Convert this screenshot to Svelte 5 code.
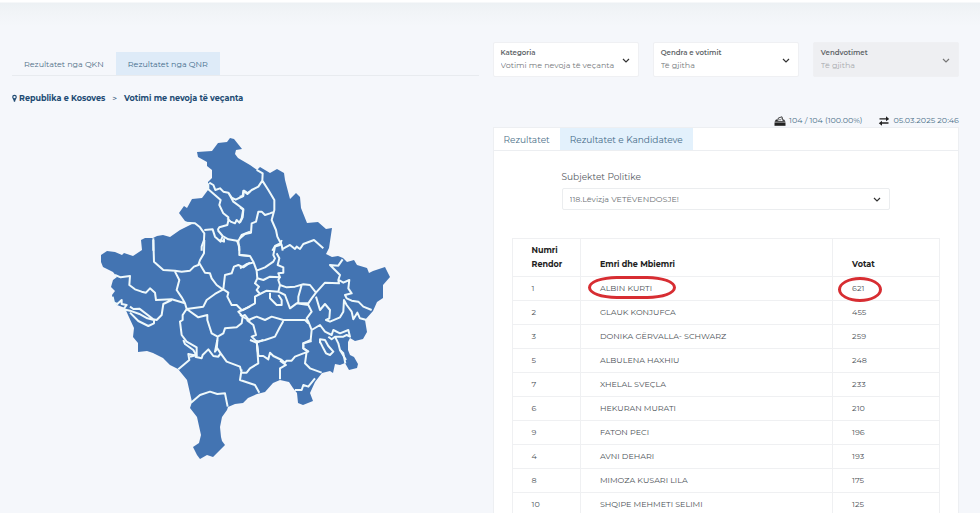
<script>
  let source = 'QNR';
  let view = 'kandidatet';

  const filters = [
    { id: 'kategoria', label: 'Kategoria', value: 'Votimi me nevoja të veçanta' },
    { id: 'qendra', label: 'Qendra e votimit', value: 'Të gjitha' },
    { id: 'vendvotimet', label: 'Vendvotimet', value: 'Të gjitha', disabled: true }
  ];

  const candidates = [
    { nr: 1, name: 'ALBIN KURTI', votes: 621, marked: true },
    { nr: 2, name: 'GLAUK KONJUFCA', votes: 455 },
    { nr: 3, name: 'DONIKA GËRVALLA- SCHWARZ', votes: 259 },
    { nr: 5, name: 'ALBULENA HAXHIU', votes: 248 },
    { nr: 7, name: 'XHELAL SVEÇLA', votes: 233 },
    { nr: 6, name: 'HEKURAN MURATI', votes: 210 },
    { nr: 9, name: 'FATON PECI', votes: 196 },
    { nr: 4, name: 'AVNI DEHARI', votes: 193 },
    { nr: 8, name: 'MIMOZA KUSARI LILA', votes: 175 },
    { nr: 10, name: 'SHQIPE MEHMETI SELIMI', votes: 125 }
  ];

  const country =
    'M197,152 212,151 218,143 227,142 230,138 234,139 242,149 236,150 235,154 238,158 250,165 257,170 260,167 270,173 277,169 284,173 285,180 290,199 296,193 300,197 301,208 307,223 318,222 326,229 332,228 329,248 326,254 332,257 338,256 343,258 347,262 354,260 357,265 367,268 369,273 373,271 385,267 390,277 383,285 383,298 377,302 373,311 365,320 367,332 363,339 355,341 350,338 348,342 348,350 350,355 354,357 358,364 357,368 349,370 345,363 340,365 335,364 333,373 330,371 322,373 315,382 310,393 313,401 308,403 303,405 298,403 297,393 293,388 289,382 280,380 273,383 265,392 257,394 248,398 243,403 235,404 228,407 227,410 222,417 220,427 221,437 222,441 225,445 213,457 207,455 200,459 197,455 193,447 199,443 201,435 197,417 190,408 192,402 187,380 178,369 170,365 163,358 153,353 147,351 138,352 138,343 133,337 134,328 128,315 125,308 117,305 113,300 112,295 115,291 111,287 113,280 117,277 113,272 103,267 101,262 101,255 107,251 115,252 122,255 124,253 133,256 142,250 141,240 145,238 153,238 157,236 163,235 170,237 180,230 192,224 185,221 179,213 184,206 187,208 192,199 202,198 208,190 208,182 212,178 212,170 207,166 207,162 198,157Z';

  // municipality borders, each sheet drawn at three times the map's scale
  const borders = [
    {
      x: 90,
      y: 130,
      d: 'M358,158 370,165 376,180 390,175 400,185 415,188 425,203 437,209 460,198 462,182 474,190 480,184 M355,160 355,178 392,210 388,225 400,250 415,262 415,272 412,285 388,292 383,300 M415,188 422,200 430,215 460,237 455,265 448,278 440,270 435,280 422,275 412,265 M285,278 315,280 330,292 343,310 342,330 335,350 335,362 M343,300 368,298 375,320 392,335 398,318 415,328 445,333 448,362 M398,318 383,300 M445,333 455,315 480,305 M190,325 190,362'
    },
    {
      x: 240,
      y: 130,
      d: 'M-1,200 8,198 10,182 22,192 35,180 55,170 67,152 68,130 50,120 M67,152 85,180 103,210 103,240 95,270 108,300 112,320 125,345 128,362 M103,245 90,250 75,255 65,245 55,245 48,275 35,280 33,308 15,312 0,325 M0,232 10,240 8,262 0,278 M128,357 150,345 165,357 170,350 180,357 190,342 222,330 250,355 M97,362 105,348 125,338'
    },
    {
      x: 90,
      y: 240,
      d: 'M190,0 192,65 220,90 255,92 275,95 300,92 312,80 325,75 330,60 342,40 343,0 M328,70 345,98 360,100 365,115 380,135 398,148 M255,95 268,120 260,150 275,172 285,190 290,207 M75,105 92,112 120,108 118,135 135,148 155,155 168,158 180,145 195,158 198,180 245,178 285,190 M245,180 220,192 215,225 200,240 190,238 148,206 130,207 120,200 M68,170 72,188 82,192 95,180 95,192 110,195 100,208 120,212 148,222 172,235 192,240 192,250 175,258 145,243 120,218 M290,207 340,200 350,180 375,162 400,148 405,105 425,100 432,80 445,75 460,82 480,68 M290,207 278,225 278,240 270,245 275,285 290,305 320,322 320,345 300,350 M290,207 325,232 352,225 352,240 365,280 383,290 400,280 405,265 440,262 455,250 458,230 445,215 480,200 M400,148 415,158 412,170 425,195 440,195 455,210 M455,230 465,225 480,245 M383,290 380,330 M388,0 402,5 402,-5 M440,0 448,20 448,45 480,48'
    },
    {
      x: 240,
      y: 240,
      d: 'M0,45 30,48 40,65 50,92 75,82 100,65 105,55 100,45 105,20 120,15 125,0 M0,85 20,72 38,68 M110,40 118,55 113,75 130,82 130,98 115,100 120,112 90,110 70,120 52,115 50,92 M52,115 45,130 57,140 50,150 60,162 45,170 45,190 10,210 0,212 M60,162 80,152 115,155 120,135 115,120 120,110 M120,135 140,142 165,140 190,133 210,135 228,158 215,175 205,190 175,190 175,170 185,135 M90,158 90,175 110,195 125,195 125,180 115,165 M115,155 135,165 150,205 170,190 205,195 215,215 200,235 205,245 215,270 M228,158 255,128 297,130 295,120 300,105 270,75 295,77 308,58 M297,120 310,128 328,120 325,145 335,160 315,165 320,175 335,182 355,185 370,200 395,210 M228,170 240,210 255,192 270,210 268,235 258,240 270,245 300,232 310,215 312,180 320,195 335,215 340,238 352,218 360,235 380,240 M0,225 25,240 50,230 75,240 95,230 130,240 195,240 205,250 M130,243 118,265 105,290 75,300 50,305 35,290 48,285 40,255 20,240 M50,305 55,345 M215,270 240,255 255,275 275,285 280,270 300,280 325,270 330,290 320,285 310,290 285,290 275,298 265,290 M215,270 212,300 190,310 190,325 205,335 M285,290 295,310 300,330 318,360 M240,310 240,298 255,300 265,318 280,335 270,345 258,340 250,325 240,305'
    },
    {
      x: 130,
      y: 340,
      d: 'M145,88 178,60 175,42 200,47 190,30 165,12 160,0 M195,50 215,55 218,45 235,28 250,48 265,50 272,40 262,25 255,35 262,0 M272,40 290,65 330,80 335,98 350,98 360,85 385,70 380,0 M335,88 330,120 375,135 388,158 M183,188 210,165 240,155 262,162 285,160 293,200 M360,0 380,8 400,0'
    },
    {
      x: 240,
      y: 340,
      d: 'M55,48 70,48 85,58 90,38 100,48 125,60 135,68 140,62 155,62 165,50 190,40 205,35 190,25 190,10 215,3 M120,62 138,75 120,85 120,118 M200,35 195,70 210,85 245,98 M165,150 185,150 190,135 205,140 225,115 M316,70 310,40 300,30 M55,48 50,5'
    }
  ];
</script>

<main class="page">
  <section class="left">
    <nav class="source-tabs">
      <button class:active={source === 'QKN'} on:click={() => (source = 'QKN')}>Rezultatet nga QKN</button>
      <button class:active={source === 'QNR'} on:click={() => (source = 'QNR')}>Rezultatet nga QNR</button>
    </nav>

    <div class="breadcrumb">
      <svg class="pin" viewBox="0 0 6 9" aria-hidden="true">
        <path d="M3,0A2.8,2.8 0 0 0 .2,2.8C.2,4.6 2,5.6 2.3,8.5H3.7C4,5.6 5.8,4.6 5.8,2.8A2.8,2.8 0 0 0 3,0ZM3,1.4A1.4,1.4 0 1 1 3,4.2A1.4,1.4 0 0 1 3,1.4Z" fill-rule="evenodd" />
      </svg>
      <a href="#kosova">Republika e Kosoves</a>
      <span class="sep">&gt;</span>
      <a href="#kategoria">Votimi me nevoja të veçanta</a>
    </div>

    <svg class="map" viewBox="90 130 310 335" role="img" aria-label="Kosova">
      <path class="country" d={country} />
      {#each borders as sheet}
        <path class="border" d={sheet.d} transform="translate({sheet.x} {sheet.y}) scale(0.3333)" />
      {/each}
    </svg>
  </section>

  <section class="right">
    <div class="filters">
      {#each filters as filter}
        <div class="filter" class:disabled={filter.disabled}>
          <label for={filter.id}>{filter.label}</label>
          <select id={filter.id} disabled={filter.disabled}>
            <option>{filter.value}</option>
          </select>
          <svg class="chevron" viewBox="0 0 8 5" aria-hidden="true"><path d="M1,1L4,4L7,1" /></svg>
        </div>
      {/each}
    </div>

    <div class="stats">
      <span class="stat">
        <svg viewBox="0 0 12 10" aria-hidden="true">
          <path d="M.5,5.8 2,3.5H3.6V5H9.2V3.5H10L11.5,5.8Z" />
          <path d="M.5,6.4H11.5V9.8H.5Z" />
          <path d="M3.8,5 4.3,2 8,.8 9,4.8" fill="none" stroke="#333" stroke-width=".9" />
          <path d="M5.2,3.4 6.2,4.2 7.6,2.5" fill="none" stroke="#333" stroke-width=".7" />
        </svg>
        104 / 104 (100.00%)
      </span>
      <span class="stat">
        <svg viewBox="0 0 12 10" aria-hidden="true">
          <path d="M1.5,2.3H8V.3L11.2,3 8,5.3V3.6H1.5ZM10.5,6.3H4V4.7L.8,7.2 4,9.7V7.8H10.5Z" />
        </svg>
        05.03.2025 20:46
      </span>
    </div>

    <div class="panel">
      <nav class="panel-tabs">
        <button class:active={view === 'rezultatet'} on:click={() => (view = 'rezultatet')}>Rezultatet</button>
        <button class:active={view === 'kandidatet'} on:click={() => (view = 'kandidatet')}>Rezultatet e Kandidateve</button>
      </nav>

      <div class="subject">
        <label for="subjekti">Subjektet Politike</label>
        <div class="subject-box">
          <select id="subjekti">
            <option>118.Lëvizja VETËVENDOSJE!</option>
          </select>
          <svg class="chevron" viewBox="0 0 8 5" aria-hidden="true"><path d="M1,1L4,4L7,1" /></svg>
        </div>
      </div>

      <table>
        <thead>
          <tr>
            <th class="col-nr">Numri Rendor</th>
            <th class="col-name">Emri dhe Mbiemri</th>
            <th>Votat</th>
          </tr>
        </thead>
        <tbody>
          {#each candidates as candidate}
            <tr>
              <td>{candidate.nr}</td>
              <td><span class:ring={candidate.marked}>{candidate.name}</span></td>
              <td><span class:ring={candidate.marked} class:round={candidate.marked}>{candidate.votes}</span></td>
            </tr>
          {/each}
        </tbody>
      </table>
    </div>
  </section>
</main>

<style>
  :global(body) {
    background: #f5f7fb;
  }

  .page {
    box-sizing: border-box;
    height: 100vh;
    overflow: hidden;
    display: grid;
    grid-template-columns: 1fr 1fr;
    gap: 14px;
    padding: 42px 21px 0 12px;
    background: linear-gradient(#fff 0, #fff 2px, #edf1f4 3px, #f1f4f7 12px, #f5f7fb 26px);
    font-family: Montserrat, Inter, sans-serif;
    font-size: 8px;
    color: #4d5257;
  }

  button,
  select {
    margin: 0;
    border: 0;
    font: inherit;
    color: inherit;
    background: none;
  }

  button {
    cursor: pointer;
  }

  .source-tabs {
    display: flex;
    margin-top: 10px;
    border-bottom: 1px solid #e8ebef;
  }

  .source-tabs button {
    height: 23px;
    padding: 0 12px;
    color: #4f6e86;
  }

  .source-tabs .active {
    background: #deebf8;
    color: #446c8c;
  }

  .breadcrumb {
    display: flex;
    align-items: center;
    margin-top: 16px;
    line-height: 12px;
    font-weight: 700;
    color: #214b73;
  }

  .breadcrumb a {
    color: inherit;
    text-decoration: none;
  }

  .pin {
    width: 5px;
    height: 9px;
    margin-right: 2px;
    fill: #214b73;
  }

  .sep {
    margin: 0 7px;
    font-weight: 500;
  }

  .map {
    display: block;
    width: 100%;
    max-width: 310px;
    margin: 26px auto 0 78px;
  }

  .country {
    fill: #4374b2;
  }

  .border {
    fill: none;
    stroke: #eff9fb;
    stroke-width: 6;
    stroke-linejoin: round;
  }

  .filters {
    display: grid;
    grid-template-columns: repeat(3, 1fr);
    gap: 14px;
  }

  .filter {
    position: relative;
    display: flex;
    flex-direction: column;
    height: 35px;
    box-sizing: border-box;
    padding: 4px 0 0 7px;
    border: 1px solid #eff0f3;
    border-radius: 2px;
    background: #fff;
  }

  .filter label {
    font-size: 7px;
    font-weight: 600;
    line-height: 11px;
    color: #606468;
  }

  .filter select {
    height: 14px;
    padding: 0;
    appearance: none;
    color: #75787b;
    opacity: 1;
  }

  .filter.disabled {
    background: #eeeff2;
  }

  .filter.disabled select {
    color: #a7a9ad;
  }

  .chevron {
    position: absolute;
    right: 8px;
    top: 50%;
    width: 8px;
    height: 5px;
    margin-top: -2px;
    fill: none;
    stroke: #333;
    stroke-width: 1.2;
    pointer-events: none;
  }

  .disabled .chevron {
    stroke: #777;
  }

  .stats {
    display: flex;
    justify-content: flex-end;
    gap: 16px;
    margin-top: 37px;
    line-height: 13px;
    color: #4b7089;
  }

  .stat {
    display: flex;
    align-items: center;
    gap: 3px;
  }

  .stat svg {
    width: 12px;
    height: 10px;
    fill: #222;
  }

  .panel {
    border: 1px solid #edeff2;
    background: #fff;
  }

  .panel-tabs {
    display: flex;
    border-bottom: 1px solid #eceef1;
  }

  .panel-tabs button {
    height: 22px;
    padding: 0 10px;
    font-size: 9px;
    color: #4b7089;
  }

  .panel-tabs .active {
    background: #e3f1fc;
    color: #456b88;
  }

  .subject {
    margin: 19px 68px 0;
  }

  .subject label {
    display: block;
    font-size: 9px;
    line-height: 13px;
    color: #555a5f;
  }

  .subject-box {
    position: relative;
    margin-top: 5px;
    border: 1px solid #ebedef;
    border-radius: 2px;
  }

  .subject-box select {
    display: block;
    width: 100%;
    height: 20px;
    padding: 0 7px;
    appearance: none;
    color: #6c7075;
  }

  table {
    width: calc(100% - 36px);
    margin: 28px 18px 0;
    border-collapse: collapse;
    table-layout: fixed;
    line-height: 14px;
  }

  th,
  td {
    padding: 0 0 0 19px;
    border: 1px solid #eff0f2;
    text-align: left;
  }

  th {
    padding-top: 4px;
    padding-bottom: 5px;
    padding-right: 18px;
    vertical-align: bottom;
    font-weight: 700;
    color: #222;
  }

  td {
    height: 21px;
    padding-bottom: 2px;
  }

  .col-nr {
    width: 16%;
    box-sizing: border-box;
  }

  .col-name {
    width: 59%;
    box-sizing: border-box;
  }

  .ring {
    position: relative;
  }

  /* hand-drawn style highlight over the top result */
  .ring::after {
    content: '';
    position: absolute;
    left: -12px;
    top: 50%;
    width: 88px;
    height: 23px;
    margin-top: -12px;
    box-sizing: border-box;
    border: 3px solid #d72d32;
    border-radius: 30px / 12px;
  }

  .round::after {
    left: -14px;
    width: 44px;
    height: 25px;
    margin-top: -11px;
    border-radius: 50%;
  }
</style>
